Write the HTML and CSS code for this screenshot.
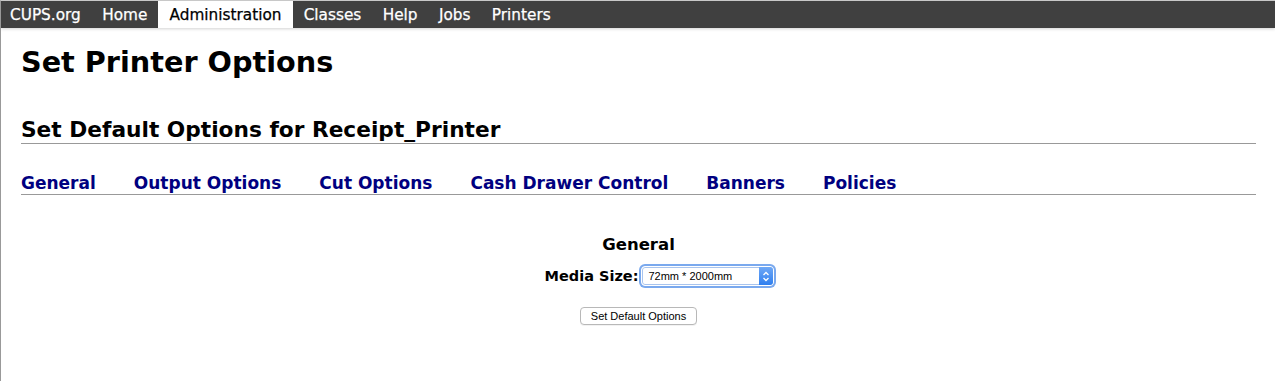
FILE: index.html
```html
<!DOCTYPE html>
<html>
<head>
<meta charset="utf-8">
<title>Set Printer Options</title>
<link rel="stylesheet" href="styles.css">
</head>
<body>
<nav class="header">
  <a class="nav-item" href="#">CUPS.org</a>
  <a class="nav-item" href="#">Home</a>
  <a class="nav-item active" href="#">Administration</a>
  <a class="nav-item" href="#">Classes</a>
  <a class="nav-item" href="#">Help</a>
  <a class="nav-item" href="#">Jobs</a>
  <a class="nav-item" href="#">Printers</a>
</nav>
<main class="body">
  <h1 class="title">Set Printer Options</h1>
  <h2 class="subtitle">Set Default Options for Receipt_Printer</h2>
  <div class="tabs">
    <a class="tab" href="#">General</a>
    <a class="tab" href="#">Output Options</a>
    <a class="tab" href="#">Cut Options</a>
    <a class="tab" href="#">Cash Drawer Control</a>
    <a class="tab" href="#">Banners</a>
    <a class="tab" href="#">Policies</a>
  </div>
  <form class="opts">
    <h3 class="group">General</h3>
    <div class="row">
      <label class="lbl">Media Size:</label>
      <span class="select">
        <span class="select-text">72mm * 2000mm</span>
        <span class="select-arrow">
          <svg width="8" height="11" viewBox="0 0 8 11"><path d="M1.5 4 L4 1.5 L6.5 4 M1.5 7 L4 9.5 L6.5 7" fill="none" stroke="#fff" stroke-width="1.3"/></svg>
        </span>
      </span>
    </div>
    <div class="btn-row">
      <button type="button" class="btn">Set Default Options</button>
    </div>
  </form>
</main>
</body>
</html>
```
FILE: styles.css
```css
html, body {
  margin: 0;
  padding: 0;
  background: #fff;
}
body {
  font-family: "DejaVu Sans", Verdana, sans-serif;
  color: #000;
  border-top: 1px solid #c8c8c8;
  border-left: 1px solid #999;
  min-height: 381px;
  box-sizing: border-box;
}
.header {
  display: flex;
  align-items: stretch;
  height: 27px;
  background: #404040;
  box-shadow: 0 1px 3px rgba(0,0,0,0.18);
}
.nav-item {
  display: flex;
  align-items: center;
  padding: 0 10.7px;
  color: #fff;
  text-decoration: none;
  font-size: 15.3px;
  font-weight: normal;
  -webkit-text-stroke: 0.25px currentColor;
}
.nav-item:first-child { padding-left: 9px; }
.nav-item.active {
  background: #fff;
  color: #000;
  padding: 0 11.5px;
}
.body {
  padding: 0 19px 0 20px;
}
.title {
  margin: 16px 0 0 0;
  font-size: 28.7px;
  font-weight: bold;
  line-height: 36px;
}
.subtitle {
  margin: 36px 0 0 0;
  font-size: 21.7px;
  font-weight: bold;
  line-height: 27px;
  padding-bottom: 0;
  border-bottom: 1px solid #999;
}
.tabs {
  display: flex;
  gap: 38px;
  margin-top: 29px;
  border-bottom: 1px solid #999;
}
.tab {
  color: #000080;
  text-decoration: none;
  font-weight: bold;
  font-size: 17px;
  line-height: 21px;
}
.opts {
  display: flex;
  flex-direction: column;
  align-items: center;
  margin-top: 39px;
}
.group {
  margin: 0;
  font-size: 16.5px;
  line-height: 22px;
}
.row {
  display: flex;
  align-items: center;
  margin-top: 10px;
  margin-left: 42px;
  gap: 3px;
}
.lbl {
  font-weight: bold;
  font-size: 14.5px;
}
.select {
  display: flex;
  align-items: center;
  width: 131px;
  height: 18px;
  border: 1px solid #fff;
  border-radius: 4px;
  box-shadow: 0 0 0 2px #7aa9ee, inset 0 0 0 1px #a8c4ee;
  background: #fff;
  font-family: "Liberation Sans", Arial, sans-serif;
  font-size: 11px;
}
.select-text {
  flex: 1;
  padding-left: 6px;
}
.select-arrow {
  width: 14px;
  height: 18px;
  background: linear-gradient(#6fa8f6, #2f7fef);
  border-radius: 0 3px 3px 0;
  display: flex;
  align-items: center;
  justify-content: center;
}
.btn-row {
  margin-top: 19px;
}
.btn {
  font-family: "Liberation Sans", Arial, sans-serif;
  font-size: 11px;
  height: 18px;
  padding: 0 10px;
  border: 1px solid #b8b8b8;
  border-radius: 4px;
  background: #fff;
  color: #000;
  box-shadow: 0 1px 0 rgba(0,0,0,0.05);
}
```
